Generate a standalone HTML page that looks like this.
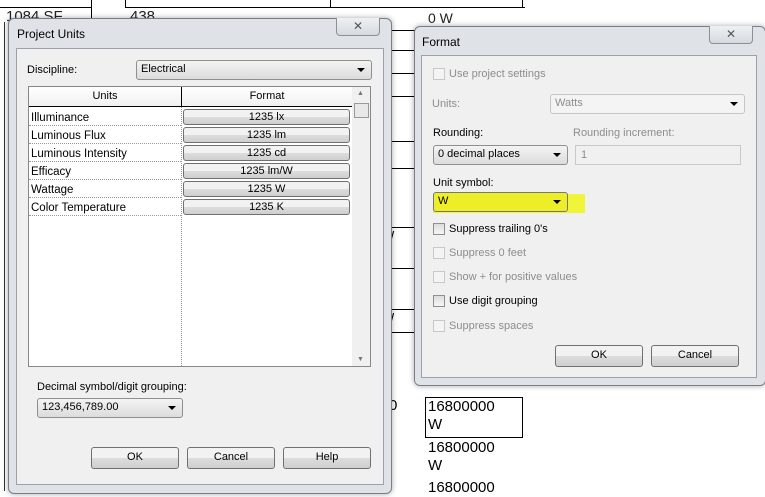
<!DOCTYPE html>
<html><head><style>
*{margin:0;padding:0;box-sizing:border-box}
body{width:765px;height:491px;background:#fff;position:relative;overflow:hidden;font-family:"Liberation Sans",sans-serif;font-size:11px;color:#000}
.a{position:absolute}
.hl{position:absolute;height:1px;background:#000}
.vl{position:absolute;width:1px;background:#000}
.frame{position:absolute;background:#dfe3e8;border:1px solid #7a7f86;border-radius:6px;box-shadow:0 0 6px rgba(0,0,0,.35)}
.panel{position:absolute;background:#f0f0f0;border:1px solid #9ba1a8}
.close{position:absolute;width:44px;height:18px;border:1px solid #8a9099;border-top:none;border-radius:0 0 4px 4px;background:linear-gradient(#eef0f3,#d6dadf);text-align:center;font-size:12px;color:#555;line-height:16px}
.combo{position:absolute;border:1px solid #8e8f8f;border-radius:3px;background:linear-gradient(#f4f4f4,#dcdcdc);padding-left:4px;line-height:17px;font-size:11px}
.combo:after{content:"";position:absolute;right:6px;top:7px;border:4px solid transparent;border-top:4px solid #000;border-bottom:none}
.btn{position:absolute;border:1px solid #707070;border-radius:3px;background:linear-gradient(#f2f2f2 50%,#dddddd 50%,#cfcfcf);text-align:center;line-height:19px;font-size:11px}
.cb{position:absolute;width:12px;height:12px;border:1px solid #8f8f8f;background:linear-gradient(#ddd,#f6f6f6)}
.cbd{border-color:#c8c8c8;background:#f4f4f4}
.g{color:#8d8d8d}
</style></head><body>
<!-- background drawing -->
<div class="hl" style="left:0;top:7px;width:91px"></div>
<div class="vl" style="left:91px;top:0;height:22px"></div>
<div class="vl" style="left:125px;top:0;height:8px"></div>
<div class="hl" style="left:125px;top:7px;width:400px"></div>
<div class="vl" style="left:330px;top:0;height:8px"></div>
<div class="vl" style="left:522px;top:0;height:8px"></div>
<div class="a" style="left:6px;top:8px;font-size:15px;color:#222">1084 SF</div>
<div class="a" style="left:130px;top:8px;font-size:15px;color:#222">438</div>
<div class="a" style="left:428px;top:10px;font-size:14px;color:#222">0 W</div>
<div class="hl" style="left:392px;top:30px;width:30px"></div>
<div class="hl" style="left:392px;top:50px;width:30px"></div>
<div class="hl" style="left:392px;top:73px;width:30px"></div>
<div class="hl" style="left:392px;top:96px;width:30px"></div>
<div class="hl" style="left:392px;top:141px;width:30px"></div>
<div class="hl" style="left:392px;top:168px;width:30px"></div>
<div class="hl" style="left:392px;top:227px;width:30px"></div>
<div class="hl" style="left:392px;top:268px;width:30px"></div>
<div class="hl" style="left:392px;top:309px;width:30px"></div>
<div class="hl" style="left:392px;top:332px;width:30px"></div>
<div class="a" style="left:390px;top:229px;font-size:15px">/</div>
<div class="a" style="left:390px;top:311px;font-size:15px">/</div>
<div class="a" style="left:389px;top:397px;font-size:15px">0</div>
<div class="a" style="left:425px;top:397px;width:98px;height:41px;border:1px solid #000;border-left:1px solid #000"></div>
<div class="a" style="left:428px;top:398px;font-size:15px;line-height:18px">16800000<br>W</div>
<div class="a" style="left:428px;top:439px;font-size:15px;line-height:18px">16800000<br>W</div>
<div class="a" style="left:428px;top:479px;font-size:15px;line-height:18px">16800000</div>
<div class="vl" style="left:4px;top:22px;height:469px;background:#333"></div>

<!-- Project Units -->
<div class="frame" style="left:8px;top:18px;width:384px;height:476px"></div>
<div class="close" style="left:336px;top:18px">✕</div>
<div class="a" style="left:17px;top:27px;font-size:12px">Project Units</div>
<div class="panel" style="left:16px;top:48px;width:368px;height:437px"></div>
<div class="a" style="left:27px;top:64px">Discipline:</div>
<div class="combo" style="left:136px;top:60px;width:236px;height:20px">Electrical</div>
<div class="a" style="left:28px;top:86px;width:343px;height:281px;background:#fff;border:1px solid #888"></div>
<div class="a" style="left:29px;top:87px;width:323px;height:20px;background:linear-gradient(#fff,#f0f0f0);border-bottom:1px solid #000"></div>
<div class="a" style="left:29px;top:90px;width:152px;text-align:center">Units</div>
<div class="a" style="left:182px;top:90px;width:170px;text-align:center">Format</div>
<div class="vl" style="left:181px;top:87px;height:20px"></div>
<div class="a" style="left:181px;top:107px;height:259px;border-left:1px dotted #999"></div>
<div class="a" style="left:352px;top:87px;width:18px;height:279px;background:#f0f0f0"></div>
<div class="a" style="left:354px;top:103px;width:15px;height:15px;border:1px solid #999;background:#e8e8e8"></div>
<div class="a" style="left:357px;top:90px;font-size:7px;color:#777">▲</div>
<div class="a" style="left:357px;top:356px;font-size:7px;color:#777">▼</div>
<div class="a" style="left:31px;top:109px;line-height:18px;font-size:11.5px">Illuminance<br>Luminous Flux<br>Luminous Intensity<br>Efficacy<br>Wattage<br>Color Temperature</div>
<div class="a" style="left:29px;top:125px;width:152px;border-top:1px dotted #999"></div>
<div class="a" style="left:29px;top:143px;width:152px;border-top:1px dotted #999"></div>
<div class="a" style="left:29px;top:161px;width:152px;border-top:1px dotted #999"></div>
<div class="a" style="left:29px;top:179px;width:152px;border-top:1px dotted #999"></div>
<div class="a" style="left:29px;top:197px;width:152px;border-top:1px dotted #999"></div>
<div class="a" style="left:29px;top:215px;width:152px;border-top:1px dotted #999"></div>
<div class="btn" style="left:183px;top:109px;width:167px;height:16px;line-height:14px">1235 lx</div>
<div class="btn" style="left:183px;top:127px;width:167px;height:16px;line-height:14px">1235 lm</div>
<div class="btn" style="left:183px;top:145px;width:167px;height:16px;line-height:14px">1235 cd</div>
<div class="btn" style="left:183px;top:163px;width:167px;height:16px;line-height:14px">1235 lm/W</div>
<div class="btn" style="left:183px;top:181px;width:167px;height:16px;line-height:14px">1235 W</div>
<div class="btn" style="left:183px;top:199px;width:167px;height:16px;line-height:14px">1235 K</div>
<div class="a" style="left:37px;top:381px">Decimal symbol/digit grouping:</div>
<div class="combo" style="left:37px;top:398px;width:146px;height:20px">123,456,789.00</div>
<div class="btn" style="left:91px;top:447px;width:88px;height:22px">OK</div>
<div class="btn" style="left:187px;top:447px;width:88px;height:22px">Cancel</div>
<div class="btn" style="left:283px;top:447px;width:88px;height:22px">Help</div>

<!-- Format -->
<div class="frame" style="left:414px;top:26px;width:352px;height:360px"></div>
<div class="close" style="left:709px;top:26px">✕</div>
<div class="a" style="left:422px;top:35px;font-size:12px">Format</div>
<div class="panel" style="left:421px;top:55px;width:336px;height:323px"></div>
<div class="cb cbd" style="left:433px;top:68px"></div>
<div class="a g" style="left:449px;top:68px">Use project settings</div>
<div class="a g" style="left:432px;top:98px">Units:</div>
<div class="combo g" style="left:550px;top:94px;width:195px;height:20px;background:#f4f4f4;border-color:#c5c5c5">Watts</div>
<div class="a" style="left:433px;top:127px">Rounding:</div>
<div class="combo" style="left:433px;top:145px;width:135px;height:20px">0 decimal places</div>
<div class="a g" style="left:573px;top:127px">Rounding increment:</div>
<div class="a g" style="left:575px;top:145px;width:166px;height:20px;border:1px solid #c8c8c8;padding-left:5px;line-height:18px">1</div>
<div class="a" style="left:433px;top:177px">Unit symbol:</div>
<div class="a" style="left:433px;top:194px;width:152px;height:19px;background:#f0f53a"></div>
<div class="combo" style="left:433px;top:192px;width:135px;height:20px;background:#eded28;border-color:#777">W</div>
<div class="cb" style="left:433px;top:223px"></div><div class="a" style="left:449px;top:223px">Suppress trailing 0's</div>
<div class="cb cbd" style="left:433px;top:247px"></div><div class="a g" style="left:449px;top:247px">Suppress 0 feet</div>
<div class="cb cbd" style="left:433px;top:271px"></div><div class="a g" style="left:449px;top:271px">Show + for positive values</div>
<div class="cb" style="left:433px;top:295px"></div><div class="a" style="left:449px;top:295px">Use digit grouping</div>
<div class="cb cbd" style="left:433px;top:320px"></div><div class="a g" style="left:449px;top:320px">Suppress spaces</div>
<div class="btn" style="left:555px;top:345px;width:88px;height:22px">OK</div>
<div class="btn" style="left:651px;top:345px;width:88px;height:22px">Cancel</div>
</body></html>
